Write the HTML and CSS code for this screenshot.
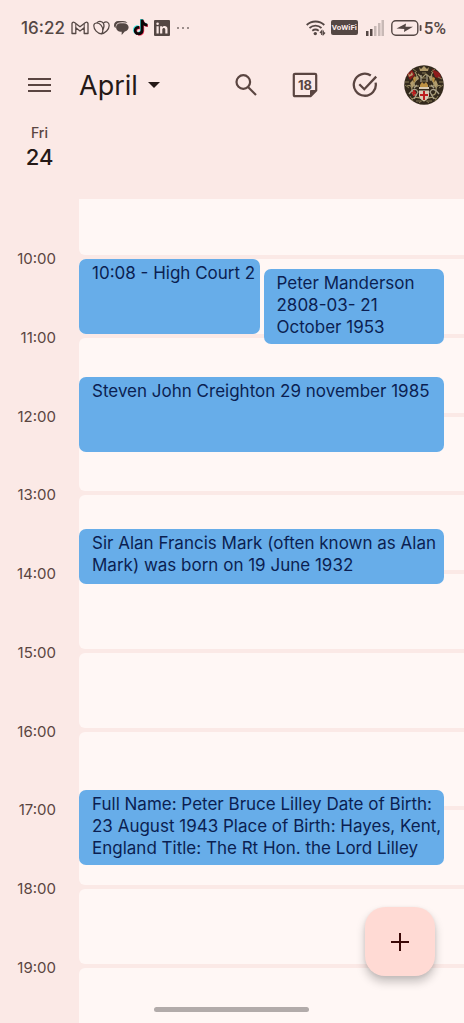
FILE: index.html
```html
<!DOCTYPE html>
<html lang="en">
<head>
    <meta charset="UTF-8">
    <meta name="viewport" content="width=device-width, initial-scale=1.0">
    <title>Calendar</title>
    <link rel="stylesheet" href="styles.css">
</head>
<body>
    <div class="status-bar">
        <span class="clock">16:22</span>
        <div class="notifications">
            <!-- mail -->
            <svg width="18" height="14" viewBox="0 0 18 14" fill="none" stroke="#544744" stroke-width="1.3" stroke-linejoin="round">
                <path d="M1 12.500V2.500Q1.500 .6 3.500 1.500L9 5.800L14.500 1.500Q16.500 .6 17 2.500V12.500H13.200V6.700L9 10L4.800 6.700V12.500Z"/>
                <path d="M4.800 6.700V3M13.200 6.700V3" stroke-width="1"/>
            </svg>
            <!-- heart -->
            <svg width="17" height="15" viewBox="0 0 17 15" fill="none" stroke="#544744" stroke-width="1.2">
                <path d="M8.300 13.800C4.500 13.500 .8 9.500 .8 5.800C.8 4 2 3 3.800 3C7 3 9.800 6.500 9.800 10C9.800 11.800 9.300 13.500 8.300 13.800Z"/>
                <path d="M3.800 3C5.300 .8 9 .6 10.500 3.500C11.500 5.500 10.900 8 9.800 10M10.500 3C13.500 .8 16.200 2.500 16.200 5.500C16.200 9.500 12 13.300 8.300 13.800"/>
            </svg>
            <!-- chat -->
            <svg width="15" height="16" viewBox="0 0 16 16" fill="#544744">
                <path d="M0 5C0 2.500 2 .6 4.500 .6H9.500C12 .6 13.500 1.500 14.300 2.600C11.500 1.700 7 1.600 4.700 2.500C3 3.300 1.500 5 1.800 8C.7 7.500 0 6.500 0 5Z"/>
                <path d="M6.500 2.800H10.500C13.500 2.800 15.600 4.700 15.600 7.300C15.600 9.800 13.800 11.300 11.500 11.800L8.200 15.500V11.900H6.500C4 11.700 2.200 9.800 2.200 7.300C2.200 4.600 4 2.800 6.500 2.800Z"/>
            </svg>
            <!-- music note -->
            <svg width="15" height="17" viewBox="0 0 15 17">
                <path fill="#45e6e2" d="M7 0H10C10.200 2.500 11.500 4 14 4.200V7C12.500 7 11.200 6.500 10 5.600V11C10 18 0 17 0 11C0 8 2.500 6 5.600 6.400V9.300C4 8.800 2.900 9.800 2.900 11C2.900 13.500 7 13.500 7 10.800Z"/>
                <path fill="#f4365c" d="M8.500 1.200H11C11.400 3.700 12.700 5 15 5.200V8C13.500 8 12.200 7.500 11.200 6.800V12C11 18.500 1.500 18 1.500 12C1.500 9 4 7.200 7 7.500V10.500C5.500 10 4.200 10.800 4.200 12C4.200 14.500 8.300 14.500 8.300 11.800Z"/>
                <path fill="#0c0808" d="M7.600 .6H10.300C10.700 3.200 12 4.500 14.400 4.700V7.400C12.900 7.400 11.600 7 10.500 6.200V11.500C10.300 18 .8 17.500 .8 11.500C.8 8.500 3.200 6.600 6.300 7V10C4.700 9.500 3.500 10.300 3.500 11.500C3.500 14 7.600 14 7.600 11.300Z"/>
            </svg>
            <!-- linkedin -->
            <svg class="linked" width="16" height="16" viewBox="0 0 16 16">
                <rect width="16" height="16" rx="1" fill="#544744"/>
                <path fill="#fbe9e6" d="M2.500 6.200H4.700V13.400H2.500ZM6.100 6.200H8.200V7.200C9.500 5.500 13.500 5.500 13.500 9V13.400H11.300V9.600C11.300 7.400 8.300 7.400 8.300 9.600V13.400H6.100Z"/>
                <circle cx="3.600" cy="3.800" r="1.300" fill="#fbe9e6"/>
            </svg>
            <svg width="12" height="2" viewBox="0 0 12 2" fill="#7d6f6c">
                <circle cx="1" cy="1" r="1"/><circle cx="6" cy="1" r="1"/><circle cx="11" cy="1" r="1"/>
            </svg>
        </div>
        <div class="signals">
            <!-- wifi -->
            <svg width="20" height="16" viewBox="0 0 20 16" fill="none" stroke="#544744" stroke-width="1.800">
                <path d="M.7 5C5.500 .3 13.500 .3 18.300 5M3.500 8C7 4.800 12 4.800 15.500 8M6.300 10.700C8.300 9.200 10.700 9.200 12.700 10.700"/>
                <circle cx="9.300" cy="13.600" r="1.700" fill="#544744" stroke="none"/>
                <path d="M15.700 15V11L14 13M17.300 10.500V14.500L19 12.500" stroke-width="1.200"/>
            </svg>
            <span class="vowifi">VoWiFi</span>
            <svg class="bars" width="18" height="16" viewBox="0 0 18 16" fill="#c8b9b6">
                <rect y="11" width="2.500" height="5" fill="#544744"/>
                <rect x="4" y="9" width="2.500" height="7" fill="#544744"/>
                <rect x="8" y="6" width="2.500" height="10"/>
                <rect x="12" y="3" width="2.500" height="13"/>
                <rect x="15.500" width="2.500" height="16"/>
            </svg>
            <!-- battery -->
            <svg width="31" height="16" viewBox="0 0 31 16">
                <rect x=".8" y=".8" width="26" height="14.400" rx="4" fill="none" stroke="#544744" stroke-width="1.400"/>
                <rect x="28.700" y="5" width="1.800" height="6" rx=".8" fill="#544744"/>
                <path fill="#544744" d="M5.500 8.500L15 3.500L14.500 6.800H22L13 12L13.300 8.900Z"/>
            </svg>
            <span class="percent">5%</span>
        </div>
    </div>

    <header class="header">
        <button class="icon-button menu" aria-label="Menu">
            <svg width="24" height="18" viewBox="0 0 24 18" stroke="#5a4541" stroke-width="2">
                <path d="M0 3H23M0 9H23M0 15H23"/>
            </svg>
        </button>
        <button class="month">April
            <svg width="12" height="6" viewBox="0 0 12 6" fill="#251917"><path d="M0 0H12L6 6Z"/></svg>
        </button>
        <div class="actions">
            <button class="icon-button" aria-label="Search">
                <svg width="24" height="24" viewBox="0 0 24 24" fill="none" stroke="#5a4541" stroke-width="2.200">
                    <circle cx="9.300" cy="9" r="6.800"/><path d="M14 14L22 22"/>
                </svg>
            </button>
            <button class="icon-button" aria-label="Today">
                <svg width="26" height="26" viewBox="0 0 26 26" fill="none" stroke="#5a4541" stroke-width="2.200" stroke-linejoin="round">
                    <path d="M3 1.800H23Q24.200 1.800 24.200 3V18.500L18.500 24.200H3Q1.800 24.200 1.800 23V3Q1.800 1.800 3 1.800Z"/>
                    <path d="M24.200 18.500H18.500V24.200Z" fill="#5a4541" stroke-width="1"/>
                    <text class="today" x="13" y="18" text-anchor="middle">18</text>
                </svg>
            </button>
            <button class="icon-button" aria-label="Tasks">
                <svg width="26" height="26" viewBox="0 0 26 26" fill="none" stroke="#5a4541" stroke-width="2.300">
                    <path d="M18.800 3.500A11 11 0 1 0 23.600 10.600"/>
                    <path d="M7.300 12.200L12.300 17.200L24.200 4.600"/>
                </svg>
            </button>
            <button class="icon-button" aria-label="Account">
                <svg width="40" height="40" viewBox="0 0 40 40">
                    <defs><clipPath id="round"><circle cx="20" cy="20" r="19.800"/></clipPath></defs>
                    <g clip-path="url(#round)">
                        <rect width="40" height="40" fill="#33291c"/>
                        <path fill="#8e1c1c" d="M3 9L8 5L11 10L6 15ZM28 4L36 8L37 14L31 12ZM8 27L11 25L13 30L9 31Z"/>
                        <path fill="#b39d6d" d="M15 2L17 4L20 1L23 4L25 2L24 6H16ZM4 8L6 10L8 7L9 10L5 12ZM11 12L14 11L15 14L12 16ZM25 12L28 10L29 14L26 16ZM6 18L9 15L11 20L8 23ZM29 18L32 15L34 20L31 23Z"/>
                        <path fill="none" stroke="#a5986d" stroke-width="1.200" d="M11 7Q15 12 11 17T15 21M29 7Q25 12 29 17T25 21M3 21Q8 19 8 25T13 30M37 21Q32 19 32 25T27 30M8 34Q14 30 20 36Q26 30 32 34M14 9L18 13L22 9L27 13"/>
                        <path fill="none" stroke="#a9a08a" stroke-width="1.300" d="M5 29Q11 21 14 27L10 34M35 29Q29 21 26 27L30 34M17 10V17M23 10V17M13 20L10 23M27 20L30 23"/>
                        <path fill="#bc9143" d="M9 13L11 11L12 14L10 18ZM29 12L31 13L30 18L28 15ZM16 20L18 17L20 19L22 17L24 20V22H16Z"/>
                        <path fill="none" stroke="#877a55" d="M1 17H5M1 20L5 23M35 17H39M35 23L39 20M12 36H17M23 36H28M15 38L20 34L25 38M34 12L38 14M18 8H22M9 4L13 7M27 7L31 4M18 13H22M17 16H23M6 31L9 36M34 31L31 36"/>
                        <path fill="#d9ccb5" d="M15 22H25V24H15ZM15 25.500H25V31Q24.500 34 20 36Q15.500 34 15 31Z"/>
                        <path fill="#bd2020" d="M19 26H21V29H24V31H21V35H19V31H16V29H19ZM9 25H10.500V27H12V28.500H10.500V31H9V28.500H7.500V27H9Z"/>
                    </g>
                </svg>
            </button>
        </div>
    </header>

    <div class="day">
        <span class="weekday">Fri</span>
        <span class="date">24</span>
    </div>

    <main class="schedule">
        <div class="hour"><span class="time"></span><div class="slot first"></div></div>
        <div class="hour">
            <span class="time">10:00</span>
            <div class="slot">
                <button class="event long half">10:08 - High Court 2</button>
                <button class="event long half second at-08">Peter Manderson<br>2808-03- 21<br>October 1953</button>
            </div>
        </div>
        <div class="hour">
            <span class="time">11:00</span>
            <div class="slot">
                <button class="event long at-30">Steven John Creighton 29 november 1985</button>
            </div>
        </div>
        <div class="hour"><span class="time">12:00</span><div class="slot"></div></div>
        <div class="hour">
            <span class="time">13:00</span>
            <div class="slot">
                <button class="event short at-27">Sir Alan Francis Mark (often known as Alan<br>Mark) was born on 19 June 1932</button>
            </div>
        </div>
        <div class="hour"><span class="time">14:00</span><div class="slot"></div></div>
        <div class="hour"><span class="time">15:00</span><div class="slot"></div></div>
        <div class="hour">
            <span class="time">16:00</span>
            <div class="slot">
                <button class="event long at-45">Full Name: Peter Bruce Lilley Date of Birth:<br>23 August 1943 Place of Birth: Hayes, Kent,<br>England Title: The Rt Hon. the Lord Lilley</button>
            </div>
        </div>
        <div class="hour"><span class="time">17:00</span><div class="slot"></div></div>
        <div class="hour"><span class="time">18:00</span><div class="slot"></div></div>
        <div class="hour"><span class="time">19:00</span><div class="slot last"></div></div>
    </main>

    <button class="add-button" aria-label="Create event">
        <svg width="18" height="18" viewBox="0 0 18 18" stroke="#3b0907" stroke-width="2"><path d="M9 0V18M0 9H18"/></svg>
    </button>
    <div class="nav-handle"></div>
</body>
</html>
```
FILE: styles.css
```css
* {
    box-sizing: border-box;
}
body {
    margin: 0;
    min-height: 100vh;
    display: flex;
    flex-direction: column;
    overflow: hidden;
    font-family: Inter, "Liberation Sans", sans-serif;
    background-color: #fbe9e6;
    color: #251917;
}
button {
    margin: 0;
    padding: 0;
    border: none;
    background: none;
    font-family: inherit;
    color: inherit;
    cursor: pointer;
}
svg {
    display: block;
    flex: none;
}

/* Status bar */
.status-bar {
    display: flex;
    align-items: center;
    height: 55px;
    padding: 0 18px 0 21px;
    color: #544744;
}
.clock {
    width: 50px;
    font-size: 17px;
    font-weight: 500;
}
.notifications {
    display: flex;
    align-items: center;
    gap: 4px;
}
.linked {
    margin: 0 3px 0 2px;
}
.signals {
    display: flex;
    align-items: center;
    margin-left: auto;
}
.vowifi {
    width: 27px;
    margin: 0 8px 0 5px;
    border-radius: 2px;
    background-color: #544744;
    color: #fbe9e6;
    font-family: Roboto, sans-serif;
    font-size: 8px;
    font-weight: 700;
    line-height: 15px;
    text-align: center;
}
.bars {
    margin-right: 7px;
}
.percent {
    margin-left: 2px;
    font-family: Roboto, sans-serif;
    font-size: 17px;
    font-weight: 500;
}

/* Header */
.header {
    display: flex;
    align-items: center;
    height: 60px;
    padding: 0 20px 0 28px;
}
.icon-button {
    display: flex;
    align-items: center;
    justify-content: center;
}
.month {
    display: flex;
    align-items: center;
    gap: 10px;
    margin-left: 27px;
    font-size: 27px;
}
.actions {
    display: flex;
    align-items: center;
    gap: 34px;
    margin-left: auto;
}
.actions .icon-button:last-child {
    margin-left: -8px;
}
.today {
    fill: #5a4541;
    stroke: none;
    font-size: 13px;
    font-weight: 700;
}
.day {
    display: flex;
    flex-direction: column;
    align-items: center;
    width: 79px;
    height: 84px;
    padding-top: 8px;
}
.weekday {
    font-size: 14px;
    font-weight: 500;
    line-height: 20px;
    color: #5a4541;
}
.date {
    font-size: 22px;
    font-weight: 500;
    line-height: 28px;
}

/* Hours */
.schedule {
    flex: 1;
    display: grid;
    grid-template-rows: 58px repeat(9, minmax(60px, 1fr)) 57px;
}
.hour {
    display: flex;
}
.time {
    width: 79px;
    padding-right: 23px;
    margin-top: -8px;
    font-size: 15px;
    line-height: 20px;
    text-align: right;
    color: #5a4541;
}
.slot {
    flex: 1;
    position: relative;
    margin: 2px 0;
    border-radius: 6px 0 0 6px;
    background-color: #fff7f5;
}
.slot.first {
    margin-top: 0;
    border-top-left-radius: 0;
}
.slot.last {
    margin-bottom: 0;
    border-bottom-left-radius: 0;
}

/* Events lie over the hour lines */
.event {
    position: absolute;
    z-index: 1;
    left: 0;
    right: 20px;
    display: flex;
    align-items: flex-start;
    padding: 3px 0 0 13px;
    border-radius: 7px;
    background-color: #67ade9;
    color: #0b1f52;
    font-size: 17px;
    line-height: 22px;
    text-align: left;
    white-space: nowrap;
    overflow: hidden;
}
.long {
    height: 75px;
}
.short {
    height: 55px;
}
.half {
    right: auto;
    width: calc(50% - 12px);
}
.second {
    left: auto;
    right: 20px;
}
.at-08 {
    top: 10px;
}
.at-27 {
    top: 34px;
}
.at-30 {
    top: 39px;
}
.at-45 {
    top: 58px;
}

.add-button {
    position: fixed;
    right: 29px;
    bottom: 47px;
    z-index: 2;
    display: flex;
    align-items: center;
    justify-content: center;
    width: 70px;
    height: 69px;
    border-radius: 20px;
    background-color: #ffdad4;
    box-shadow: 0 6px 10px rgba(0,0,0,0.22), 0 1px 4px rgba(0,0,0,0.08);
}
.nav-handle {
    position: fixed;
    bottom: 11px;
    left: 50%;
    z-index: 2;
    width: 155px;
    height: 5px;
    margin-left: -78px;
    border-radius: 3px;
    background-color: #b2abaa;
}
```
